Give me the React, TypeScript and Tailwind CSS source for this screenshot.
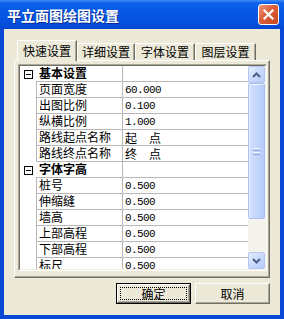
import React from "react";

type Row = { cat?: boolean; name: string; value?: string };

const rows: Row[] = [
  { cat: true, name: "基本设置" },
  { name: "页面宽度", value: "60.000" },
  { name: "出图比例", value: "0.100" },
  { name: "纵横比例", value: "1.000" },
  { name: "路线起点名称", value: "起　点" },
  { name: "路线终点名称", value: "终　点" },
  { cat: true, name: "字体字高" },
  { name: "桩号", value: "0.500" },
  { name: "伸缩缝", value: "0.500" },
  { name: "墙高", value: "0.500" },
  { name: "上部高程", value: "0.500" },
  { name: "下部高程", value: "0.500" },
  { name: "标尺", value: "0.500" },
];

function CloseBtn() {
  return (
    <div className="w-[21px] h-[21px] rounded-[3px] border border-white bg-[linear-gradient(135deg,#ef9a7c_0%,#dc5f3a_45%,#c5441f_100%)] flex items-center justify-center">
      <svg width="13" height="13" viewBox="0 0 13 13">
        <path d="M2.5 2.5 L10.5 10.5 M10.5 2.5 L2.5 10.5" stroke="white" strokeWidth="2.2" strokeLinecap="square" />
      </svg>
    </div>
  );
}

function Tab({ label, w, active }: { label: string; w: string; active?: boolean }) {
  return (
    <div
      className={
        active
          ? "h-[21px] -mb-[1px] bg-[#ECE9D8] border-l border-t border-r border-l-white border-t-white border-r-[#716F64] rounded-tl-[2px] shadow-[inset_-1px_0_0_#ACA899] flex items-center justify-center text-[12px] leading-none " + w
          : "h-[17px] bg-[#ECE9D8] border-l border-t border-r border-l-white border-t-white border-r-[#716F64] rounded-tl-[2px] shadow-[inset_-1px_0_0_#ACA899] flex items-center justify-center text-[12px] leading-none " + w
      }
    >
      <span className={active ? "pb-[1px]" : ""}>{label}</span>
    </div>
  );
}

function Minus() {
  return (
    <div className="ml-[4px] mt-[4px] w-[9px] h-[9px] border border-black flex items-center justify-center bg-white">
      <div className="w-[5px] h-[1px] bg-black" />
    </div>
  );
}

function ValueText({ v }: { v: string }) {
  const numeric = /^[0-9.]+$/.test(v);
  return numeric ? (
    <span className="font-['Liberation_Mono',monospace] text-[11px] tracking-[-0.6px]">{v}</span>
  ) : (
    <span className="text-[12px]">{v}</span>
  );
}

function Grid() {
  return (
    <div className="w-[228px] h-[203px] overflow-hidden bg-white flex flex-col">
      {rows.map((r, i) =>
        r.cat ? (
          <div key={i} className="h-[16px] shrink-0 flex">
            <div className="w-[16px] shrink-0">
              <Minus />
            </div>
            <div className="w-[86px] shrink-0 border-b border-[#b8b8b8] pl-[3px] text-[12px] leading-[14px] font-bold">{r.name}</div>
            <div className="flex-1 border-l border-b border-[#b8b8b8]" />
          </div>
        ) : (
          <div key={i} className="h-[16px] shrink-0 flex">
            <div className="w-[16px] shrink-0" />
            <div className="w-[86px] shrink-0 border-l border-b border-[#b8b8b8] pl-[2px] text-[12px] leading-[14px] whitespace-nowrap">{r.name}</div>
            <div className="flex-1 border-l border-b border-[#b8b8b8] pl-[2px] leading-[14px] h-[16px] flex items-start pt-[1px]">
              <ValueText v={r.value ?? ""} />
            </div>
          </div>
        )
      )}
    </div>
  );
}

function ScrollBtn({ up }: { up?: boolean }) {
  return (
    <div className="h-[17px] shrink-0 rounded-[2px] border border-[#B1C6F5] bg-[linear-gradient(135deg,#E6EEFF_0%,#CADAFC_50%,#B8CCF9_100%)] flex items-center justify-center">
      <svg width="9" height="6" viewBox="0 0 9 6">
        <path d={up ? "M1 5 L4.5 1.5 L8 5" : "M1 1 L4.5 4.5 L8 1"} fill="none" stroke="#4D6185" strokeWidth="2" />
      </svg>
    </div>
  );
}

function ScrollBar() {
  return (
    <div className="w-[17px] h-[203px] flex flex-col bg-[#F4F3EE]">
      <ScrollBtn up />
      <div className="h-[136px] shrink-0 rounded-[2px] border border-[#A9C0F3] bg-[linear-gradient(to_right,#D3E0FE_0%,#C4D6FC_50%,#B6CBF8_100%)] shadow-[inset_1px_1px_0_#ECF2FF] flex flex-col items-center justify-center gap-[1px]">
        <div className="w-[7px] h-[1px] bg-[#EEF3FF]" />
        <div className="w-[7px] h-[1px] bg-[#8CA9EC]" />
        <div className="w-[7px] h-[1px] bg-[#EEF3FF]" />
        <div className="w-[7px] h-[1px] bg-[#8CA9EC]" />
      </div>
      <div className="flex-1" />
      <ScrollBtn />
    </div>
  );
}

export default function App() {
  return (
    <div className="w-[284px] h-[319px] flex flex-col bg-[#0A47D5] font-['Noto_Sans_CJK_SC',sans-serif] text-black select-none">
      <div className="h-[29px] shrink-0 flex items-center justify-between pl-[7px] pr-[5px] bg-[linear-gradient(to_bottom,#3D8CF7_0px,#0B62EA_3px,#0659E6_10px,#0454E1_20px,#0347D3_29px)]">
        <span className="text-white text-[14px] font-bold leading-none [text-shadow:1px_1px_0_#0A2C95]">平立面图绘图设置</span>
        <CloseBtn />
      </div>
      <div className="mx-[4px] mb-[4px] flex-1 bg-[#ECE9D8] flex flex-col pt-[11px] px-[10px]">
        <div className="h-[20px] shrink-0 flex items-end pl-[3px] relative z-10">
          <Tab label="快速设置" w="w-[60px]" active />
          <Tab label="详细设置" w="w-[58px]" />
          <Tab label="字体设置" w="w-[60px]" />
          <Tab label="图层设置" w="w-[61px]" />
        </div>
        <div className="w-[256px] h-[218px] shrink-0 border-l border-t border-r border-b border-l-white border-t-white border-r-[#716F64] border-b-[#716F64] shadow-[inset_-1px_-1px_0_#ACA899] pl-[3px] pt-[3px]">
          <div className="w-[249px] h-[207px] border border-t-[#ACA899] border-l-[#ACA899] border-r-white border-b-white">
            <div className="w-full h-full border border-t-[#716F64] border-l-[#716F64] border-r-[#F1EFE2] border-b-[#F1EFE2] flex">
              <Grid />
              <ScrollBar />
            </div>
          </div>
        </div>
        <div className="mt-[5px] flex justify-end gap-[4px]">
          <div className="w-[75px] h-[21px] border border-black bg-[#ECE9D8]">
            <div className="w-full h-full border-l border-t border-r border-b border-l-white border-t-white border-r-[#716F64] border-b-[#716F64] shadow-[inset_-1px_-1px_0_#ACA899] p-[2px]">
              <div className="w-full h-full border border-dotted border-black flex items-center justify-center text-[12px] leading-none">确定</div>
            </div>
          </div>
          <div className="w-[75px] h-[21px] bg-[#ECE9D8] border-l border-t border-r border-b border-l-white border-t-white border-r-[#716F64] border-b-[#716F64] shadow-[inset_-1px_-1px_0_#ACA899] flex items-center justify-center text-[12px] leading-none">
            取消
          </div>
        </div>
      </div>
    </div>
  );
}
